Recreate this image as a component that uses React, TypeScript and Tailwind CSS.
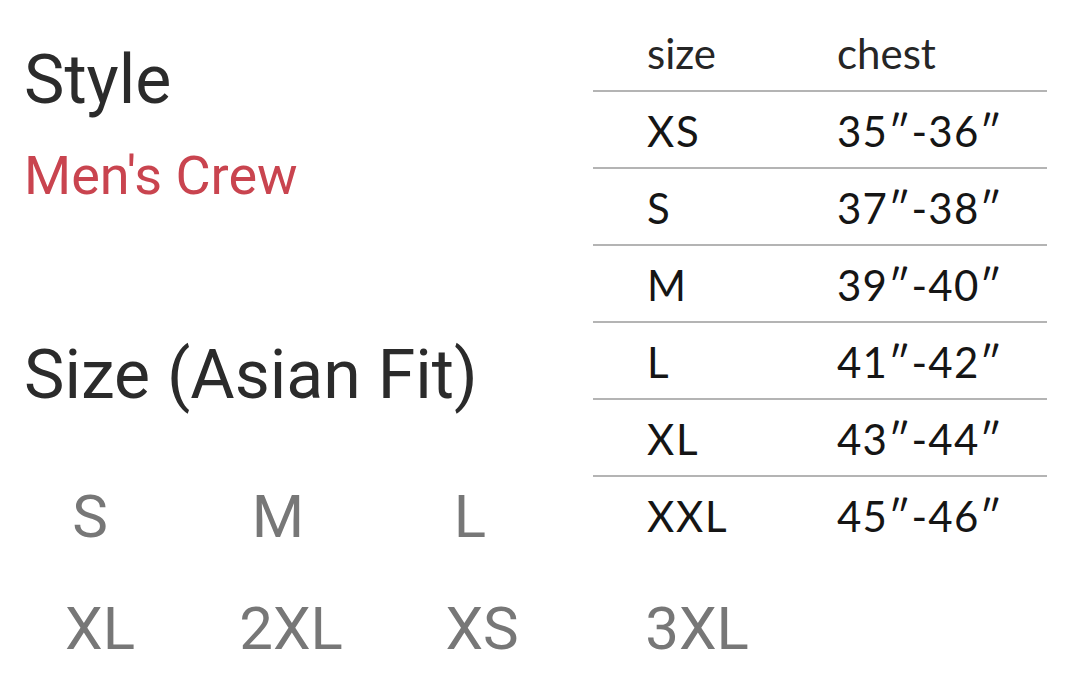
import React from 'react';

const chart = [
  { size: 'XS', chest: '35″-36″' },
  { size: 'S', chest: '37″-38″' },
  { size: 'M', chest: '39″-40″' },
  { size: 'L', chest: '41″-42″' },
  { size: 'XL', chest: '43″-44″' },
  { size: 'XXL', chest: '45″-46″' },
];

// cell widths tuned so each label sits centred where the picture has it
const firstRow = [
  { label: 'S', w: 'w-[180px]' },
  { label: 'M', w: 'w-[196px]' },
  { label: 'L', w: 'w-[188px]' },
];
const secondRow = [
  { label: 'XL', w: 'w-[200px]' },
  { label: '2XL', w: 'w-[182px]' },
  { label: 'XS', w: 'w-[200px]' },
  { label: '3XL', w: 'w-[230px]' },
];

function SizeChart() {
  return (
    <div className="w-[454px] font-['Lato','Noto_Sans',sans-serif] text-[42px] text-[#151515]">
      <div className="flex h-[92px] border-b-2 border-[#b4b4b4] pt-[17px] leading-[73px] text-[#262626]">
        <span className="w-[244px] pl-[54px]">size</span>
        <span>chest</span>
      </div>
      {chart.map((row, i) => (
        <div
          key={row.size}
          className={`flex h-[77px] pt-[4px] leading-[71px] ${
            i < chart.length - 1 ? 'border-b-2 border-[#b4b4b4]' : ''
          }`}
        >
          <span className="w-[244px] pl-[54px] tracking-[0.04em]">{row.size}</span>
          <span className="tracking-[0.03em]">{row.chest}</span>
        </div>
      ))}
    </div>
  );
}

export default function App() {
  return (
    <div className="w-[1072px] h-[689px] overflow-hidden bg-white font-['Roboto','Liberation_Sans',sans-serif]">
      <div className="flex h-[548px]">
        <div className="w-[593px] flex flex-col">
          <div className="pl-[24px] mt-[46px] text-[68px] leading-[68px] text-[#2b2b2b]">Style</div>
          <div className="pl-[24px] mt-[35px] text-[54px] leading-[54px] text-[#c9444f]">Men's Crew</div>
          <div className="pl-[24px] mt-[138px] text-[68px] leading-[68px] text-[#2b2b2b]">Size (Asian Fit)</div>
          <div className="flex mt-[78px] text-[60px] leading-[60px] text-[#777777]">
            {firstRow.map((s) => (
              <div key={s.label} className={`${s.w} text-center`}>
                {s.label}
              </div>
            ))}
          </div>
        </div>
        <SizeChart />
      </div>
      <div className="flex mt-[51px] text-[60px] leading-[60px] text-[#777777]">
        {secondRow.map((s) => (
          <div key={s.label} className={`${s.w} text-center`}>
            {s.label}
          </div>
        ))}
      </div>
    </div>
  );
}
